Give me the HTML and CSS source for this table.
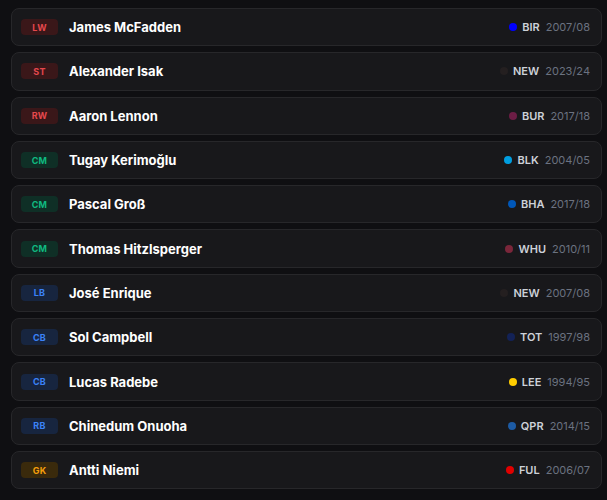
FILE: index.html
```html
<!DOCTYPE html>
<html lang="en">
<head>
    <meta charset="UTF-8">
    <meta name="viewport" content="width=device-width, initial-scale=1.0">
    <title>Career History</title>
    <link rel="stylesheet" href="styles.css">
</head>
<body>
    <ul class="career">
        <li class="spell">
            <span class="pos pos-att">LW</span>
            <span class="name">James McFadden</span>
            <span class="club"><i class="dot" style="background:#0000ff"></i><b>BIR</b><em>2007/08</em></span>
        </li>
        <li class="spell">
            <span class="pos pos-att">ST</span>
            <span class="name">Alexander Isak</span>
            <span class="club"><i class="dot" style="background:#241f20"></i><b>NEW</b><em>2023/24</em></span>
        </li>
        <li class="spell">
            <span class="pos pos-att">RW</span>
            <span class="name">Aaron Lennon</span>
            <span class="club"><i class="dot" style="background:#6c1d45"></i><b>BUR</b><em>2017/18</em></span>
        </li>
        <li class="spell">
            <span class="pos pos-mid">CM</span>
            <span class="name">Tugay Kerimoğlu</span>
            <span class="club"><i class="dot" style="background:#009ee0"></i><b>BLK</b><em>2004/05</em></span>
        </li>
        <li class="spell">
            <span class="pos pos-mid">CM</span>
            <span class="name">Pascal Groß</span>
            <span class="club"><i class="dot" style="background:#0057b8"></i><b>BHA</b><em>2017/18</em></span>
        </li>
        <li class="spell">
            <span class="pos pos-mid">CM</span>
            <span class="name">Thomas Hitzlsperger</span>
            <span class="club"><i class="dot" style="background:#7a263a"></i><b>WHU</b><em>2010/11</em></span>
        </li>
        <li class="spell">
            <span class="pos pos-def">LB</span>
            <span class="name">José Enrique</span>
            <span class="club"><i class="dot" style="background:#241f20"></i><b>NEW</b><em>2007/08</em></span>
        </li>
        <li class="spell">
            <span class="pos pos-def">CB</span>
            <span class="name">Sol Campbell</span>
            <span class="club"><i class="dot" style="background:#132257"></i><b>TOT</b><em>1997/98</em></span>
        </li>
        <li class="spell">
            <span class="pos pos-def">CB</span>
            <span class="name">Lucas Radebe</span>
            <span class="club"><i class="dot" style="background:#ffcd00"></i><b>LEE</b><em>1994/95</em></span>
        </li>
        <li class="spell">
            <span class="pos pos-def">RB</span>
            <span class="name">Chinedum Onuoha</span>
            <span class="club"><i class="dot" style="background:#1d5ba4"></i><b>QPR</b><em>2014/15</em></span>
        </li>
        <li class="spell">
            <span class="pos pos-gk">GK</span>
            <span class="name">Antti Niemi</span>
            <span class="club"><i class="dot" style="background:#e00000"></i><b>FUL</b><em>2006/07</em></span>
        </li>
    </ul>
</body>
</html>
```

FILE: styles.css
```css
* {
    box-sizing: border-box;
    margin: 0;
    padding: 0;
}

body {
    font-family: Inter, 'Noto Sans', sans-serif;
    background-color: #0f0f12;
    color: #fafafa;
}

.career {
    list-style: none;
    display: flex;
    flex-direction: column;
    gap: 6px;
    padding: 8px 5px 0 11px;
}

.spell {
    display: flex;
    align-items: center;
    height: 38.3px;
    padding: 0 11px 0 9px;
    background-color: #18181b;
    border: 1px solid #27272a;
    border-radius: 8px;
}

.pos {
    width: 37px;
    height: 16px;
    border-radius: 4px;
    display: flex;
    justify-content: center;
    align-items: center;
    font-size: 9px;
    font-weight: 700;
    letter-spacing: 0.2px;
}

.pos-att {
    background-color: #3a1719;
    color: #e5484d;
}

.pos-mid {
    background-color: #0f2f26;
    color: #10b981;
}

.pos-def {
    background-color: #17253f;
    color: #3b82f6;
}

.pos-gk {
    background-color: #3a2a0c;
    color: #f59e0b;
}

.name {
    margin-left: 11px;
    font-size: 13px;
    font-weight: 700;
    color: #ffffff;
    flex: 1;
}

.club {
    display: flex;
    align-items: center;
    gap: 6px;
    font-size: 11px;
}

.dot {
    width: 8px;
    height: 8px;
    border-radius: 50%;
    margin-right: -1px;
}

.club b {
    font-weight: 600;
    color: #cdd1d8;
}

.club em {
    font-style: normal;
    color: #6b7280;
}
```
